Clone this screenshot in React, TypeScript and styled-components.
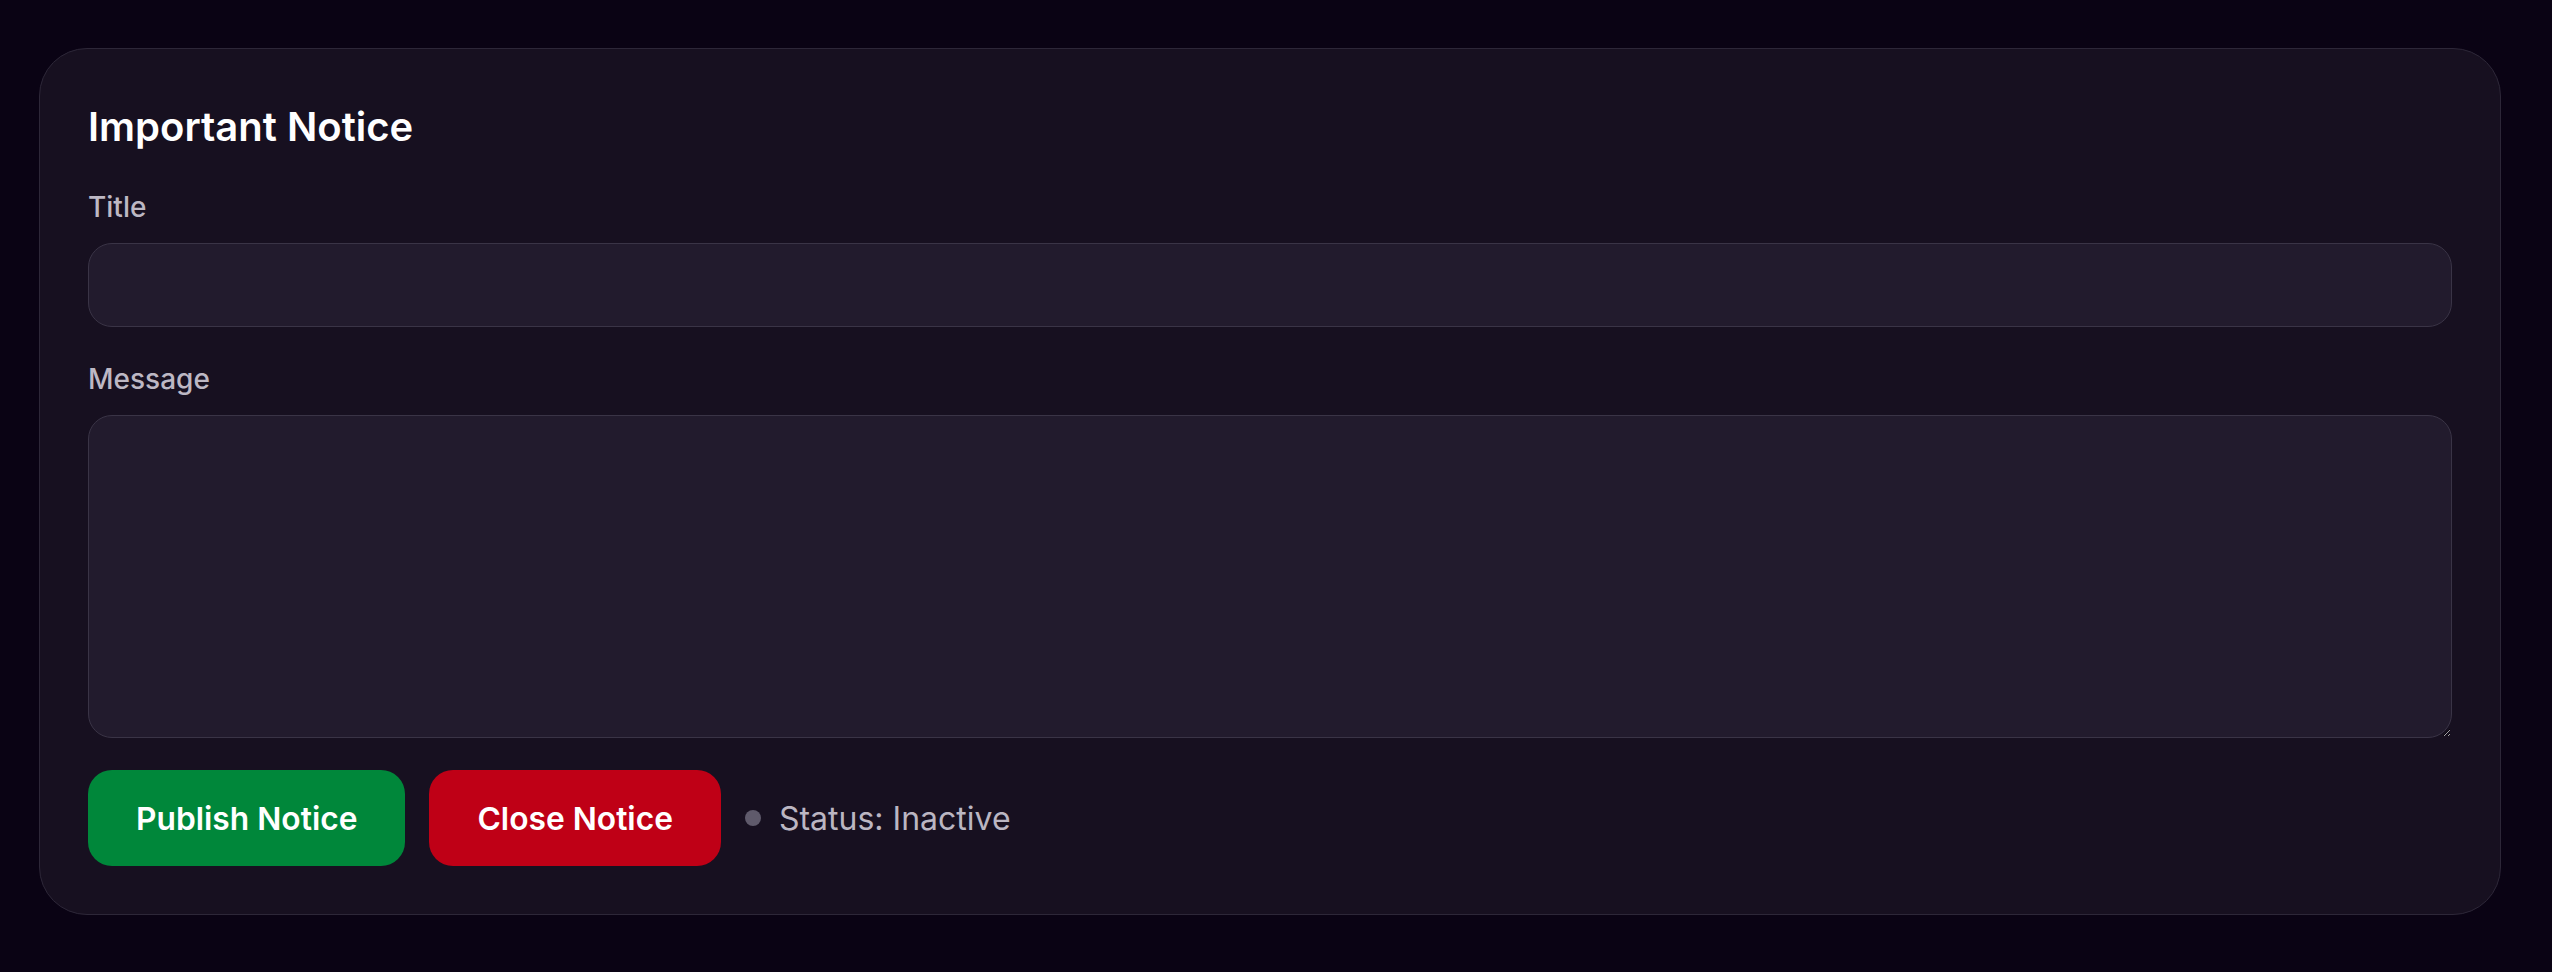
import React, { useState } from 'react'
import styled, { createGlobalStyle } from 'styled-components'

const GlobalStyle = createGlobalStyle`
  html, body {
    margin: 0;
    padding: 0;
    background: #0a0314;
  }
  body {
    font-family: 'Inter', 'Noto Sans', sans-serif;
    -webkit-font-smoothing: antialiased;
  }
  * {
    box-sizing: border-box;
  }
`

const Page = styled.div`
  padding: 48px 51px 56px 39px;
`

const Card = styled.section`
  background: #171020;
  border: 1px solid #2d2738;
  border-radius: 48px;
  padding: 54px 48px 48px;
`

const Heading = styled.h2`
  margin: 0 0 36px;
  font-size: 40px;
  line-height: 48px;
  font-weight: 600;
  color: #ffffff;
`

const Field = styled.div`
  display: flex;
  flex-direction: column;
  gap: 16px;
  margin-bottom: 32px;
`

const Label = styled.label`
  font-size: 28px;
  line-height: 40px;
  font-weight: 500;
  color: #bdb8c4;
`

const TextInput = styled.input`
  height: 84px;
  width: 100%;
  padding: 0 28px;
  background: #221b2d;
  border: 1px solid #3a3446;
  border-radius: 24px;
  color: #ffffff;
  font-family: inherit;
  font-size: 28px;
  outline: none;
`

const TextArea = styled.textarea`
  height: 323px;
  width: 100%;
  padding: 20px 28px;
  background: #221b2d;
  border: 1px solid #3a3446;
  border-radius: 24px;
  color: #ffffff;
  font-family: inherit;
  font-size: 28px;
  outline: none;
  display: block;
`

const Actions = styled.div`
  display: flex;
  align-items: center;
  gap: 24px;
`

const ActionButton = styled.button<{ $tone: 'publish' | 'close' }>`
  height: 96px;
  padding: 0 48px;
  border: none;
  border-radius: 24px;
  background: ${(p) => (p.$tone === 'publish' ? '#00873a' : '#bf0016')};
  color: #ffffff;
  font-family: inherit;
  font-size: 31.75px;
  font-weight: 600;
  cursor: pointer;
`

const Status = styled.div`
  display: flex;
  align-items: center;
  gap: 18px;
  font-size: 32px;
  color: #bbb6c2;
`

const Dot = styled.span<{ $active: boolean }>`
  width: 16px;
  height: 16px;
  border-radius: 50%;
  background: ${(p) => (p.$active ? '#22c55e' : '#5f5a6b')};
`

const App: React.FC = () => {
  const [title, setTitle] = useState('')
  const [message, setMessage] = useState('')
  const [active, setActive] = useState(false)

  return (
    <>
      <GlobalStyle />
      <Page>
        <Card>
          <Heading>Important Notice</Heading>
          <Field>
            <Label htmlFor="notice-title">Title</Label>
            <TextInput id="notice-title" value={title} onChange={(e) => setTitle(e.target.value)} />
          </Field>
          <Field>
            <Label htmlFor="notice-message">Message</Label>
            <TextArea id="notice-message" value={message} onChange={(e) => setMessage(e.target.value)} />
          </Field>
          <Actions>
            <ActionButton $tone="publish" onClick={() => setActive(true)}>
              Publish Notice
            </ActionButton>
            <ActionButton $tone="close" onClick={() => setActive(false)}>
              Close Notice
            </ActionButton>
            <Status>
              <Dot $active={active} />
              Status: {active ? 'Active' : 'Inactive'}
            </Status>
          </Actions>
        </Card>
      </Page>
    </>
  )
}

export default App
